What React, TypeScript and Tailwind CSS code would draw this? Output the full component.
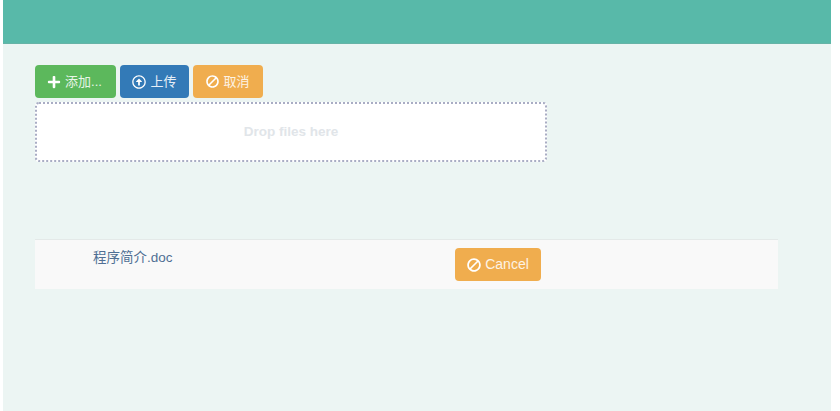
import React from 'react'
import { FaBan, FaPlus, FaRegArrowAltCircleUp } from 'react-icons/fa'

const FONT = 'font-["Liberation_Sans","Noto_Sans_CJK_SC",sans-serif]'

export default function App() {
  return (
    <div className={`h-[411px] w-[840px] bg-white pl-[3px] pr-[9px] ${FONT}`}>
      <div className="h-full bg-[#ecf5f3]">
        {/* Header band */}
        <div className="h-[44px] border-b border-[#66b3a6] bg-[#58b9a9]" />

        <div className="pl-[32px] pr-[53px] pt-[21px]">
          {/* Toolbar */}
          <div className="flex gap-[4px]">
            <button className="flex h-[33px] w-[81px] items-center justify-center gap-[4px] rounded-[4px] bg-[#5cb85c] pr-[2px] text-[13px] text-[#e8f5e8]">
              <FaPlus size={14} className="text-white" />
              添加...
            </button>
            <button className="flex h-[33px] w-[69px] items-center justify-center gap-[4px] rounded-[4px] bg-[#337ab7] text-[13px] text-[#e6eff7]">
              <FaRegArrowAltCircleUp size={14} className="text-white" />
              上传
            </button>
            <button className="flex h-[33px] w-[70px] items-center justify-center gap-[4px] rounded-[4px] bg-[#f0ad4e] text-[13px] text-[#fdf3e5]">
              <FaBan size={13} className="-scale-x-100 text-white" />
              取消
            </button>
          </div>

          {/* Drop zone */}
          <div className="mt-[4px] flex h-[60px] w-[512px] items-center justify-center rounded-[4px] border-2 border-dotted border-[#a9adc4] bg-white text-[13.5px] font-bold text-[#e1e5e9]">
            Drop files here
          </div>

          {/* File row */}
          <div className="mt-[77px] flex h-[50px] border-t border-[#e4e9e8] bg-[#f9f9f9]">
            <div className="w-[420px] pl-[58px] pt-[8px] text-[13.5px] text-[#4f6f94]">程序简介.doc</div>
            <div className="pt-[8px]">
              <button className="flex h-[33px] w-[86px] items-center justify-center gap-[4px] rounded-[4px] bg-[#f0ad4e] text-[14px] text-[#fdf3e5]">
                <FaBan size={14} className="-scale-x-100 text-white" />
                Cancel
              </button>
            </div>
          </div>
        </div>
      </div>
    </div>
  )
}
